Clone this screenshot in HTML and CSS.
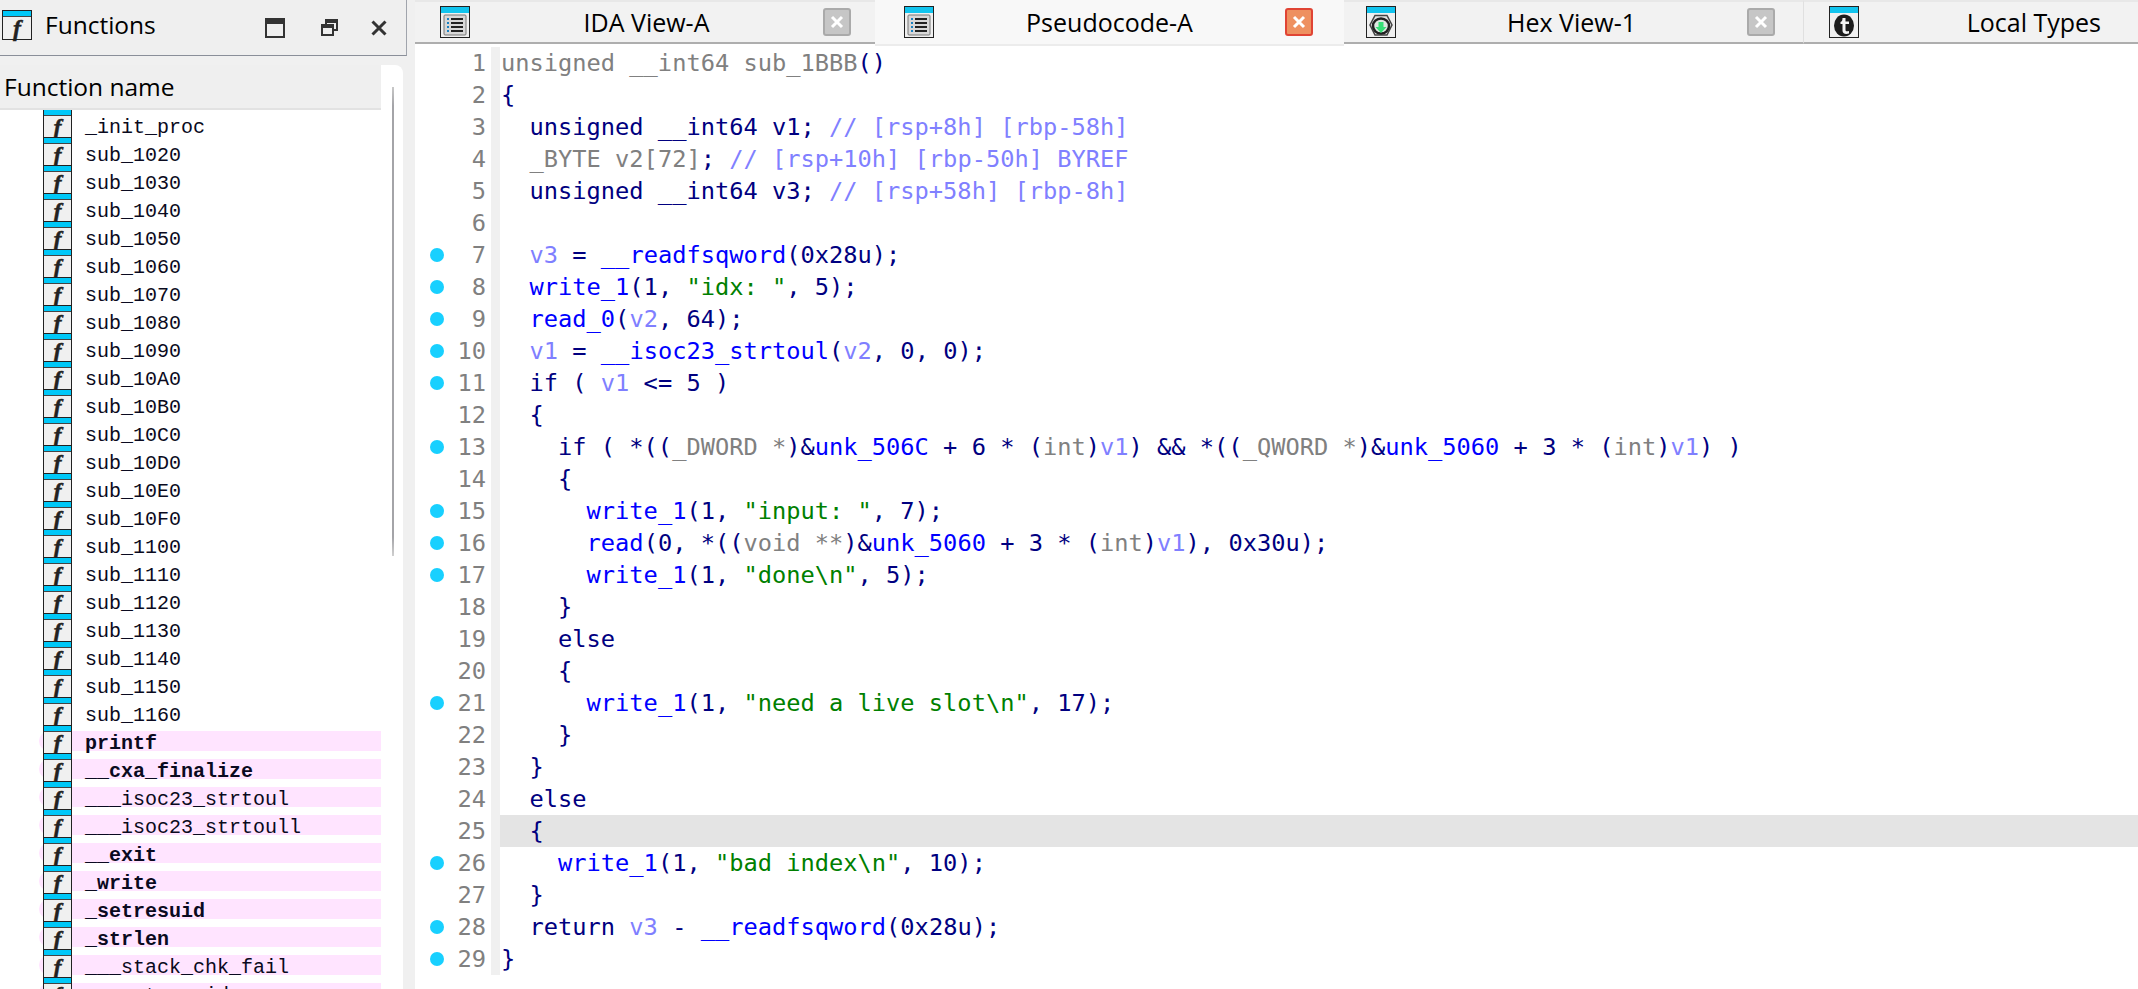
FILE: index.html
```html
<!DOCTYPE html>
<html lang="en">
<head>
  <meta charset="UTF-8" />
  <title>IDA - Pseudocode-A</title>
  <link rel="stylesheet" href="styles.css">
</head>
<body>
  <svg class="defs" width="0" height="0">
    <symbol id="i-list" viewBox="0 0 30 32">
      <rect x="0.5" y="0.5" width="29" height="31" fill="#f0f0f0" stroke="#222"/>
      <rect x="1" y="1" width="28" height="6" fill="#12c4ee"/>
      <rect x="4" y="9" width="22" height="20" rx="1" fill="#d8d8d8" stroke="#777"/>
      <path d="M11 13h12M11 17h12M11 21h12M11 25h12" stroke="#222" stroke-width="2"/>
      <path d="M7 13h2M7 17h2M7 21h2M7 25h2" stroke="#1a80c0" stroke-width="2"/>
    </symbol>
    <symbol id="i-x" viewBox="0 0 14 14">
      <path d="M2 2l10 10M12 2L2 12" stroke="#fff" stroke-width="3"/>
    </symbol>
  </svg>

  <div class="left">
    <div class="panel-head">
      <span class="ficon title-icon"></span>
      <span class="panel-title">Functions</span>
      <svg class="win-btn btn-max" viewBox="0 0 20 20"><rect x="1" y="1" width="18" height="18" fill="none" stroke="#333" stroke-width="2"/><rect x="1" y="1" width="18" height="5" fill="#333"/></svg>
      <svg class="win-btn btn-restore" viewBox="0 0 17 17"><path d="M5 5V1h11v10h-4" fill="none" stroke="#333" stroke-width="2"/><path d="M5 1h11v3H5z" fill="#333"/><rect x="1" y="6" width="11" height="10" fill="none" stroke="#333" stroke-width="2"/><rect x="1" y="6" width="11" height="3" fill="#333"/></svg>
      <svg class="win-btn btn-close" viewBox="0 0 16 16"><path d="M1.5 1.5l13 13M14.5 1.5l-13 13" stroke="#333" stroke-width="3"/></svg>
    </div>

    <div class="func-box">
      <div class="func-head">Function name</div>
      <div class="scrollbar"></div>
      <div class="func-rows">
        <div class="row"><span class="ficon"></span><span class="fname">_init_proc</span></div>
        <div class="row"><span class="ficon"></span><span class="fname">sub_1020</span></div>
        <div class="row"><span class="ficon"></span><span class="fname">sub_1030</span></div>
        <div class="row"><span class="ficon"></span><span class="fname">sub_1040</span></div>
        <div class="row"><span class="ficon"></span><span class="fname">sub_1050</span></div>
        <div class="row"><span class="ficon"></span><span class="fname">sub_1060</span></div>
        <div class="row"><span class="ficon"></span><span class="fname">sub_1070</span></div>
        <div class="row"><span class="ficon"></span><span class="fname">sub_1080</span></div>
        <div class="row"><span class="ficon"></span><span class="fname">sub_1090</span></div>
        <div class="row"><span class="ficon"></span><span class="fname">sub_10A0</span></div>
        <div class="row"><span class="ficon"></span><span class="fname">sub_10B0</span></div>
        <div class="row"><span class="ficon"></span><span class="fname">sub_10C0</span></div>
        <div class="row"><span class="ficon"></span><span class="fname">sub_10D0</span></div>
        <div class="row"><span class="ficon"></span><span class="fname">sub_10E0</span></div>
        <div class="row"><span class="ficon"></span><span class="fname">sub_10F0</span></div>
        <div class="row"><span class="ficon"></span><span class="fname">sub_1100</span></div>
        <div class="row"><span class="ficon"></span><span class="fname">sub_1110</span></div>
        <div class="row"><span class="ficon"></span><span class="fname">sub_1120</span></div>
        <div class="row"><span class="ficon"></span><span class="fname">sub_1130</span></div>
        <div class="row"><span class="ficon"></span><span class="fname">sub_1140</span></div>
        <div class="row"><span class="ficon"></span><span class="fname">sub_1150</span></div>
        <div class="row"><span class="ficon"></span><span class="fname">sub_1160</span></div>
        <div class="row imp"><span class="ficon"></span><span class="fname bold">printf</span></div>
        <div class="row imp"><span class="ficon"></span><span class="fname bold">__cxa_finalize</span></div>
        <div class="row imp"><span class="ficon"></span><span class="fname">___isoc23_strtoul</span></div>
        <div class="row imp"><span class="ficon"></span><span class="fname">___isoc23_strtoull</span></div>
        <div class="row imp"><span class="ficon"></span><span class="fname bold">__exit</span></div>
        <div class="row imp"><span class="ficon"></span><span class="fname bold">_write</span></div>
        <div class="row imp"><span class="ficon"></span><span class="fname bold">_setresuid</span></div>
        <div class="row imp"><span class="ficon"></span><span class="fname bold">_strlen</span></div>
        <div class="row imp"><span class="ficon"></span><span class="fname">___stack_chk_fail</span></div>
        <div class="row imp"><span class="ficon"></span><span class="fname">___setresuid</span></div>
      </div>
    </div>
  </div>

  <div class="main">
    <div class="tabs">
      <div class="tab tab-ida">
        <svg class="tab-icon"><use href="#i-list"/></svg>
        <span class="tab-title">IDA View-A</span>
        <span class="tab-close"><svg><use href="#i-x"/></svg></span>
      </div>
      <div class="tab tab-pseudo active">
        <svg class="tab-icon"><use href="#i-list"/></svg>
        <span class="tab-title">Pseudocode-A</span>
        <span class="tab-close"><svg><use href="#i-x"/></svg></span>
      </div>
      <div class="tab tab-hex">
        <svg class="tab-icon" viewBox="0 0 30 32">
          <rect x="0.5" y="0.5" width="29" height="31" fill="#f0f0f0" stroke="#222"/>
          <rect x="1" y="1" width="28" height="6" fill="#12c4ee"/>
          <path d="M9 9.5h12l5 9.500-5 10H9L4 19z" fill="#e4e4e4" stroke="#444" stroke-width="1.500"/>
          <ellipse cx="15" cy="20" rx="8" ry="7.500" fill="#dfe8e2" stroke="#222" stroke-width="2.500"/>
          <path d="M12.500 16h5v5h3l-5.500 6-5.500-6h3z" fill="#38e078"/>
        </svg>
        <span class="tab-title">Hex View-1</span>
        <span class="tab-close"><svg><use href="#i-x"/></svg></span>
      </div>
      <div class="tab tab-types">
        <svg class="tab-icon" viewBox="0 0 30 32">
          <rect x="0.5" y="0.5" width="29" height="31" fill="#f0f0f0" stroke="#222"/>
          <rect x="1" y="1" width="28" height="6" fill="#12c4ee"/>
          <ellipse cx="15" cy="19.500" rx="10" ry="11" fill="#1c1c1c"/>
          <path d="M13.500 12h3v3.500h3.500v2.500h-3.500v6c0 1.500 1.500 1.500 3.500 1v2.500c-4 1-6.500 0-6.500-3v-6.500h-2v-2c1.500-.5 2-1.500 2-4z" fill="#f4f4f4"/>
        </svg>
        <span class="tab-title">Local Types</span>
      </div>
    </div>

    <div class="code">
      <div class="line"><div class="gut">1</div><div class="strip"></div><div class="src"><span class="g">unsigned __int64 sub_1BBB</span>()</div></div>
      <div class="line"><div class="gut">2</div><div class="strip"></div><div class="src">{</div></div>
      <div class="line"><div class="gut">3</div><div class="strip"></div><div class="src">  unsigned __int64 v1; <span class="c">// [rsp+8h] [rbp-58h]</span></div></div>
      <div class="line"><div class="gut">4</div><div class="strip"></div><div class="src">  <span class="g">_BYTE v2[72]</span>; <span class="c">// [rsp+10h] [rbp-50h] BYREF</span></div></div>
      <div class="line"><div class="gut">5</div><div class="strip"></div><div class="src">  unsigned __int64 v3; <span class="c">// [rsp+58h] [rbp-8h]</span></div></div>
      <div class="line"><div class="gut">6</div><div class="strip"></div><div class="src"></div></div>
      <div class="line"><div class="gut"><span class="dot"></span>7</div><div class="strip"></div><div class="src">  <span class="v">v3</span> = <span class="f">__readfsqword</span>(0x28u);</div></div>
      <div class="line"><div class="gut"><span class="dot"></span>8</div><div class="strip"></div><div class="src">  <span class="f">write_1</span>(1, <span class="s">"idx: "</span>, 5);</div></div>
      <div class="line"><div class="gut"><span class="dot"></span>9</div><div class="strip"></div><div class="src">  <span class="f">read_0</span>(<span class="v">v2</span>, 64);</div></div>
      <div class="line"><div class="gut"><span class="dot"></span>10</div><div class="strip"></div><div class="src">  <span class="v">v1</span> = <span class="f">__isoc23_strtoul</span>(<span class="v">v2</span>, 0, 0);</div></div>
      <div class="line"><div class="gut"><span class="dot"></span>11</div><div class="strip"></div><div class="src">  if ( <span class="v">v1</span> &lt;= 5 )</div></div>
      <div class="line"><div class="gut">12</div><div class="strip"></div><div class="src">  {</div></div>
      <div class="line"><div class="gut"><span class="dot"></span>13</div><div class="strip"></div><div class="src">    if ( *((<span class="g">_DWORD *</span>)&amp;<span class="f">unk_506C</span> + 6 * (<span class="g">int</span>)<span class="v">v1</span>) &amp;&amp; *((<span class="g">_QWORD *</span>)&amp;<span class="f">unk_5060</span> + 3 * (<span class="g">int</span>)<span class="v">v1</span>) )</div></div>
      <div class="line"><div class="gut">14</div><div class="strip"></div><div class="src">    {</div></div>
      <div class="line"><div class="gut"><span class="dot"></span>15</div><div class="strip"></div><div class="src">      <span class="f">write_1</span>(1, <span class="s">"input: "</span>, 7);</div></div>
      <div class="line"><div class="gut"><span class="dot"></span>16</div><div class="strip"></div><div class="src">      <span class="f">read</span>(0, *((<span class="g">void **</span>)&amp;<span class="f">unk_5060</span> + 3 * (<span class="g">int</span>)<span class="v">v1</span>), 0x30u);</div></div>
      <div class="line"><div class="gut"><span class="dot"></span>17</div><div class="strip"></div><div class="src">      <span class="f">write_1</span>(1, <span class="s">"done\n"</span>, 5);</div></div>
      <div class="line"><div class="gut">18</div><div class="strip"></div><div class="src">    }</div></div>
      <div class="line"><div class="gut">19</div><div class="strip"></div><div class="src">    else</div></div>
      <div class="line"><div class="gut">20</div><div class="strip"></div><div class="src">    {</div></div>
      <div class="line"><div class="gut"><span class="dot"></span>21</div><div class="strip"></div><div class="src">      <span class="f">write_1</span>(1, <span class="s">"need a live slot\n"</span>, 17);</div></div>
      <div class="line"><div class="gut">22</div><div class="strip"></div><div class="src">    }</div></div>
      <div class="line"><div class="gut">23</div><div class="strip"></div><div class="src">  }</div></div>
      <div class="line"><div class="gut">24</div><div class="strip"></div><div class="src">  else</div></div>
      <div class="line"><div class="gut">25</div><div class="strip"></div><div class="src current">  {</div></div>
      <div class="line"><div class="gut"><span class="dot"></span>26</div><div class="strip"></div><div class="src">    <span class="f">write_1</span>(1, <span class="s">"bad index\n"</span>, 10);</div></div>
      <div class="line"><div class="gut">27</div><div class="strip"></div><div class="src">  }</div></div>
      <div class="line"><div class="gut"><span class="dot"></span>28</div><div class="strip"></div><div class="src">  return <span class="v">v3</span> - <span class="f">__readfsqword</span>(0x28u);</div></div>
      <div class="line"><div class="gut"><span class="dot"></span>29</div><div class="strip"></div><div class="src">}</div></div>
    </div>
  </div>
</body>
</html>
```

FILE: styles.css
```css
* {
  box-sizing: border-box;
}

body {
  display: flex;
  height: 100vh;
  margin: 0;
  overflow: hidden;
  background-color: #f0f0f0;
  font-family: "Open Sans", "Noto Sans", sans-serif;
  color: #000;
}

.defs {
  position: absolute;
}

/* left panel */
.left {
  display: flex;
  flex-direction: column;
  width: 415px;
  flex-shrink: 0;
}

.panel-head {
  display: flex;
  align-items: center;
  width: 407px;
  height: 56px;
  padding-left: 2px;
  background-color: #efefef;
  border-right: 1px solid #a0a4ac;
  border-bottom: 1px solid #8a8f99;
}

.panel-title {
  flex: 1;
  margin-left: 13px;
  margin-bottom: 6px;
  font-size: 24.5px;
}

.win-btn {
  flex-shrink: 0;
}

.btn-max {
  width: 20px;
  height: 20px;
  margin-right: 36px;
}

.btn-restore {
  width: 17px;
  height: 17px;
  margin-right: 33px;
}

.btn-close {
  width: 16px;
  height: 16px;
  margin-right: 19px;
}

.func-box {
  position: relative;
  flex: 1;
  width: 403px;
  margin-top: 9px;
  background-color: #fff;
  border-top-right-radius: 8px;
  overflow: hidden;
}

.func-head {
  width: 381px;
  height: 45px;
  padding-left: 4px;
  line-height: 44px;
  font-size: 24.5px;
  background-color: #efefef;
  border-bottom: 2px solid #e2e2e2;
}

.scrollbar {
  position: absolute;
  left: 392px;
  top: 22px;
  width: 2px;
  height: 469px;
  background: linear-gradient(#c8c8c8, #a4a4a8 4%, #a4a4a8 96%, #d0d0d0);
}

.func-rows {
  width: 381px;
}

.row {
  position: relative;
  display: flex;
  align-items: center;
  height: 28px;
  font-family: "Liberation Mono", monospace;
  font-size: 20px;
  color: #0a0a20;
}

.row.imp::before {
  content: "";
  position: absolute;
  left: 39px;
  right: 0;
  top: 5px;
  height: 20px;
  border-radius: 10px 0 0 10px;
  background-color: #ffe4ff;
}

.ficon {
  position: relative;
  flex-shrink: 0;
  width: 29px;
  height: 28px;
  margin-left: 43px;
  text-align: center;
  background: linear-gradient(#00c8f8 5px, #444 5px, #444 6px, #f0f0f0 6px);
  border-left: 1px solid #222;
  border-right: 1px solid #222;
  border-bottom: 1px solid #222;
}

.ficon::after {
  content: "f";
  font-family: "Liberation Serif", serif;
  font-size: 24px;
  font-weight: bold;
  font-style: italic;
  line-height: 34px;
  color: #222;
  -webkit-text-stroke: 0.4px #222;
}

.ficon.title-icon {
  width: 30px;
  height: 30px;
  margin-left: 0;
  margin-bottom: 6px;
  border-top: 1px solid #222;
}

.fname {
  position: relative;
  margin-left: 13px;
  margin-top: 6px;
  white-space: pre;
}

.fname.bold {
  font-weight: bold;
}

/* tabs */
.main {
  flex: 1;
  min-width: 0;
  display: flex;
  flex-direction: column;
  background-color: #fff;
}

.tabs {
  display: flex;
  height: 46px;
  flex-shrink: 0;
}

.tab {
  display: flex;
  align-items: center;
  height: 44px;
  background-color: #f2f2f2;
  border-top: 2px solid #e8e8e8;
  border-bottom: 2px solid #aeaeae;
}

.tab-title {
  flex: 1;
  text-align: center;
  font-size: 25px;
}

.tab-icon {
  flex-shrink: 0;
  width: 30px;
  height: 32px;
}

.tab-close {
  display: flex;
  align-items: center;
  justify-content: center;
  flex-shrink: 0;
  width: 28px;
  height: 28px;
  background-color: #c6c6c6;
  border: 2px solid #aaa;
  border-radius: 3px;
}

.tab-close svg {
  width: 14px;
  height: 14px;
}

.tab-ida {
  width: 460px;
  padding: 0 24px 0 25px;
}

.tab-pseudo {
  width: 469px;
  padding: 0 31px 0 29px;
}

.tab-hex {
  width: 460px;
  padding: 0 28px 0 22px;
  border-right: 1px solid #e0e0e0;
}

.tab-types {
  flex: 1;
  padding-left: 25px;
}

.tab-types .tab-title {
  text-align: right;
  padding-right: 37px;
}

.tab.active {
  height: 46px;
  background-color: #f8f8f8;
  border-top: none;
  border-bottom: 2px solid #ececec;
}

.active .tab-close {
  background-color: #ee9060;
  border-color: #e04434;
}

/* code */
.code {
  font-family: "DejaVu Sans Mono", monospace;
  font-size: 23.7px;
  color: #000080;
  padding-top: 1px;
}

.line {
  display: flex;
  height: 32px;
  line-height: 32px;
}

.gut {
  display: flex;
  justify-content: flex-end;
  align-items: center;
  flex-shrink: 0;
  width: 76px;
  padding-right: 5px;
  color: #808080;
}

.dot {
  width: 14px;
  height: 14px;
  margin-right: auto;
  margin-left: 15px;
  border-radius: 50%;
  background-color: #18d0ff;
}

.strip {
  flex-shrink: 0;
  width: 9px;
  background-color: #f0f0f0;
}

.src {
  flex: 1;
  padding-left: 1px;
  white-space: pre;
}

.src.current {
  background-color: #e4e4e4;
}

.g { color: #808080; }
.v { color: #7f7fff; }
.f { color: #0000ff; }
.s { color: #008000; }
.c { color: #8080ff; }
```
